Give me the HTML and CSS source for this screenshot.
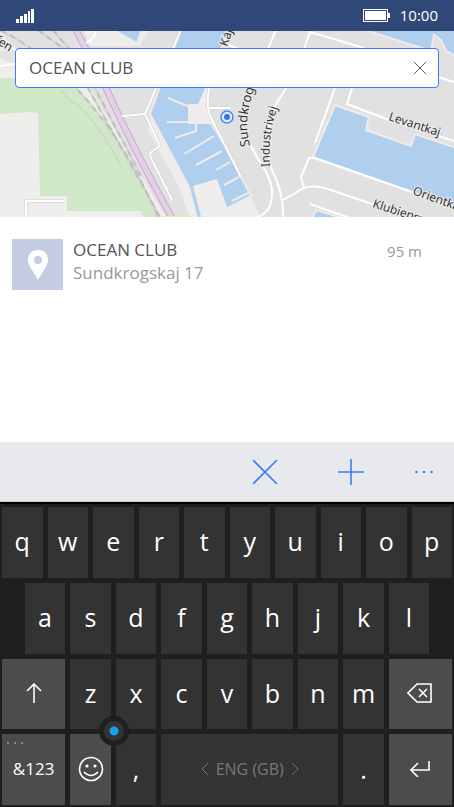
FILE: index.html
```
<!DOCTYPE html>
<html lang="en">
<head>
    <meta charset="UTF-8">
    <meta name="viewport" content="width=device-width, initial-scale=1.0">
    <title>Search place</title>
    <link rel="stylesheet" href="styles.css">
</head>
<body>
    <header class="status-bar">
        <svg class="signal" width="18" height="14" viewBox="0 0 18 14" fill="#fff">
            <rect x="0" y="10" width="3" height="4"/>
            <rect x="4" y="7" width="3" height="7"/>
            <rect x="8" y="5" width="3" height="9"/>
            <rect x="12" y="2" width="2" height="12"/>
            <rect x="15" y="0" width="3" height="14"/>
        </svg>
        <svg class="battery" width="27" height="13" viewBox="0 0 27 13">
            <rect x="0.5" y="0.5" width="24" height="12" fill="none" stroke="#fff"/>
            <rect x="2" y="2" width="21" height="9" fill="#fff"/>
            <rect x="25" y="4" width="2" height="5" fill="#fff"/>
        </svg>
        <span class="clock">10:00</span>
    </header>

    <section class="map">
        <svg class="map-canvas" viewBox="0 31 454 186" preserveAspectRatio="xMidYMid slice">
            <defs>
                <path id="sundkrog" d="M250 146 C244 120 248 108 258 76"/>
                <path id="industrivej" d="M270 167 C268 140 272 122 280 100"/>
            </defs>
            <rect x="0" y="31" width="454" height="186" fill="#e1e1e1"/>

            <!-- light ground and park -->
            <path fill="#f0eeec" d="M0 58 L15 64 L60 75 L90 88 L166 217 H0 Z M0 31 L14 48 L0 52 Z M84 31 H148 L140 46 L90 46 Z"/>
            <path fill="#d0e8c8" d="M0 78 H60 L76 88 L100 118 L118 142 L135 172 L158 217 H143 L141 211 H67 V196 H40 L38 113 L30 112 L0 114 Z"/>
            <path fill="none" stroke="#c2d3ba" d="M61 90 L70 101 L78 105 Q105 132 121 167"/>

            <!-- railway -->
            <g fill="none" stroke="#d6d5d4" stroke-width="2">
                <path d="M0 30 Q45 53 76 88 Q125 140 158 217"/>
                <path d="M38 30 L68 52 L88 88 Q108 124 160 217"/>
                <path d="M53 30 L70 50 L95 88 L141 176"/>
            </g>
            <g fill="none" stroke="#c0bfbf" stroke-width="2" stroke-dasharray="6 5">
                <path d="M0 30 Q45 53 76 88 Q125 140 158 217"/>
                <path d="M38 30 L68 52 L88 88 Q108 124 160 217"/>
                <path d="M53 30 L70 50 L95 88 L141 176"/>
            </g>
            <path fill="none" stroke="#c6aec4" stroke-width="7" d="M76 30 L106 88 Q134 150 172 218"/>
            <path fill="none" stroke="#e4cfe8" stroke-width="5" d="M76 30 L106 88 Q134 150 172 218"/>
            <path fill="#f3e6a8" d="M163 216 H187 V217 H163 Z"/>

            <!-- harbour -->
            <g fill="#b0cfee" stroke="#eeecea" stroke-width="2">
                <path d="M112 29 H142 L137 43 Z"/>
                <path d="M181 29 H229 L206 88 L199 105 H189 V123 H211 L227 150 L251 196 L206 219 H197 L189 187 L150 114 Z"/>
                <path d="M335 105 L369 117 L366 130 L411 146 L415 134 L456 148 V209 L412 192 L313 157 Z"/>
                <path d="M316 210 L346 219 H312 Z"/>
                <path d="M362 29 H456 V56 L446 51 L441 40 L434 35 L431 51 Z"/>
            </g>
            <path fill="#f0eeec" d="M189 105 H199 L206 88 H209 L208 110 L213 123 H189 Z M193 186 L217 179 L228 210 L251 197 L260 217 H201 Z M150 117 L189 187 L196 217 H190 L178 185 L148 130 Z"/>
            <path fill="none" stroke="#eeecea" stroke-width="2" d="M168 98 L190 107 M167 122 H196 V131 L175 138 M184 154 L214 136 M196 165 L222 151 M216 170 L230 162 M224 185 L239 177 M232 201 L248 193"/>

            <!-- streets -->
            <g fill="none" stroke="#cfcecd" stroke-width="3" stroke-linejoin="round">
                <path d="M26 219 V201 H64"/>
                <path d="M181 30 L145 114 L160 146 L151 152 Q149 155 152 160 L172 200 M122 116 L145 114"/>
                <path d="M209 88 Q206 106 210 116 L241 177 M208 108 H230"/>
            </g>
            <g fill="none" stroke="#fff" stroke-width="2" stroke-linejoin="round">
                <path d="M26 219 V201 H64 M0 66 L16 64"/>
                <path d="M181 30 L145 114 L160 146 L151 152 Q149 155 152 160 L172 200 M122 116 L145 114"/>
                <path d="M209 88 Q206 106 210 116 L241 177 M208 108 H230"/>
                <path d="M0 38 L18 52 M96 31 Q94 40 86 43"/>
                <path d="M276 30 L268 49 M364 48 L310 32 L304 49 M227 44 L238 49"/>
                <path d="M286 88 L275 106 Q262 145 272 170 Q284 193 283 219"/>
                <path d="M249 142 Q258 160 265 170 Q276 189 270 206 Q266 214 256 218"/>
                <path d="M335 88 L315 143 M352 88 L347 104 L389 120 L454 141 M438 77 L454 82"/>
                <path d="M283 200 L304 188 Q312 185 325 188 L372 204 L410 219 M304 188 L301 177 L309 158 Q312 157 320 160 L412 192 L454 207 M310 204 L350 218"/>
            </g>

            <g class="street-names">
                <text transform="translate(-6 42) rotate(32)">fen</text>
                <text transform="translate(227 47) rotate(-70)">Kaj</text>
                <text class="main-street"><textPath href="#sundkrog">Sundkrog</textPath></text>
                <text><textPath href="#industrivej">Industrivej</textPath></text>
                <text transform="translate(388 120) rotate(18)">Levantkaj</text>
                <text transform="translate(412 194) rotate(20)">Orientkaj</text>
                <text transform="translate(372 207) rotate(18)">Klubiensvej</text>
            </g>

            <circle cx="227" cy="117" r="6" fill="#e6ecf8" stroke="#4a86f7" stroke-width="1.5"/>
            <circle cx="227" cy="117" r="3" fill="#2f74f5"/>
        </svg>

        <form class="search-box">
            <input type="text" class="search-input" aria-label="Search place" value="OCEAN CLUB">
            <button type="button" class="clear-button" aria-label="Clear">
                <svg width="14" height="14" viewBox="0 0 14 14" fill="none" stroke="#555"><path d="M1 1 L13 13 M13 1 L1 13"/></svg>
            </button>
        </form>
    </section>

    <main class="results">
        <a href="#" class="result">
            <span class="result-icon">
                <svg width="22" height="32" viewBox="0 0 22 32" fill="#fff" fill-rule="evenodd">
                    <path d="M11 1 C17 1 21 5 21 11 C21 17 15 23 11 31 C7 23 1 17 1 11 C1 5 5 1 11 1 Z M11 7 A4 4 0 1 0 11 15 A4 4 0 1 0 11 7 Z"/>
                </svg>
            </span>
            <span class="result-text">
                <span class="result-name">OCEAN CLUB</span>
                <span class="result-address">Sundkrogskaj 17</span>
            </span>
            <span class="result-distance">95 m</span>
        </a>
    </main>

    <nav class="command-bar">
        <button type="button" class="command" aria-label="Cancel">
            <svg width="26" height="26" viewBox="0 0 26 26"><path d="M1 1 L25 25 M25 1 L1 25"/></svg>
        </button>
        <button type="button" class="command" aria-label="Add">
            <svg width="26" height="26" viewBox="0 0 26 26"><path d="M13 0 V26 M0 13 H26"/></svg>
        </button>
        <button type="button" class="command more" aria-label="More">
            <svg width="18" height="4" viewBox="0 0 18 4"><circle cx="1.5" cy="2" r="1.3"/><circle cx="9" cy="2" r="1.3"/><circle cx="16.5" cy="2" r="1.3"/></svg>
        </button>
    </nav>

    <div class="keyboard">
        <button type="button" class="key">q</button>
        <button type="button" class="key">w</button>
        <button type="button" class="key">e</button>
        <button type="button" class="key">r</button>
        <button type="button" class="key">t</button>
        <button type="button" class="key">y</button>
        <button type="button" class="key">u</button>
        <button type="button" class="key">i</button>
        <button type="button" class="key">o</button>
        <button type="button" class="key">p</button>

        <button type="button" class="key key-indent">a</button>
        <button type="button" class="key">s</button>
        <button type="button" class="key">d</button>
        <button type="button" class="key">f</button>
        <button type="button" class="key">g</button>
        <button type="button" class="key">h</button>
        <button type="button" class="key">j</button>
        <button type="button" class="key">k</button>
        <button type="button" class="key">l</button>

        <button type="button" class="key key-wide" aria-label="Shift">
            <svg width="16" height="20" viewBox="0 0 16 20"><path d="M8 20 V1 M1 8 L8 1 L15 8"/></svg>
        </button>
        <button type="button" class="key">z</button>
        <button type="button" class="key">x</button>
        <button type="button" class="key">c</button>
        <button type="button" class="key">v</button>
        <button type="button" class="key">b</button>
        <button type="button" class="key">n</button>
        <button type="button" class="key">m</button>
        <button type="button" class="key key-wide" aria-label="Backspace">
            <svg width="26" height="20" viewBox="0 0 26 20"><path d="M10 1 H24 V19 H10 L1 10 Z M12 6 L20 14 M20 6 L12 14"/></svg>
        </button>

        <button type="button" class="key key-wide key-symbols"><span class="key-dots"></span>&amp;123</button>
        <button type="button" class="key key-emoji" aria-label="Emoji">
            <svg width="26" height="26" viewBox="0 0 26 26">
                <circle cx="13" cy="13" r="11.5"/>
                <path d="M6 16 Q13 23 20 16"/>
                <circle class="eye" cx="9" cy="10" r="1.6"/>
                <circle class="eye" cx="17" cy="10" r="1.6"/>
            </svg>
            <span class="cursor-stick"></span>
        </button>
        <button type="button" class="key">,</button>
        <button type="button" class="key key-space">
            <svg width="8" height="12" viewBox="0 0 8 12"><path d="M7 0 L1 6 L7 12"/></svg>
            ENG (GB)
            <svg width="8" height="12" viewBox="0 0 8 12"><path d="M1 0 L7 6 L1 12"/></svg>
        </button>
        <button type="button" class="key">.</button>
        <button type="button" class="key key-wide" aria-label="Enter">
            <svg width="20" height="16" viewBox="0 0 20 16"><path d="M19 0 V9 H1 M8 2 L1 9 L8 16"/></svg>
        </button>
    </div>
</body>
</html>
```
FILE: styles.css
```
* {
    box-sizing: border-box;
}
body {
    display: flex;
    flex-direction: column;
    min-height: 100vh;
    margin: 0;
    font-family: "Open Sans", "Noto Sans", sans-serif;
    background: #fff;
}
button {
    padding: 0;
    border: none;
    background: none;
    font-family: inherit;
}
svg {
    display: block;
}

/* status bar */
.status-bar {
    display: flex;
    align-items: center;
    height: 31px;
    padding: 0 16px;
    background: #304878;
    color: #fff;
}
.battery {
    margin-left: auto;
}
.clock {
    margin-left: 10px;
    padding-bottom: 2px;
    font-size: 15px;
    line-height: 20px;
}

/* map */
.map {
    position: relative;
    height: 186px;
    padding: 17px 15px;
}
.map-canvas {
    position: absolute;
    top: 0;
    left: 0;
    width: 100%;
    height: 100%;
}
.street-names {
    font-family: "Noto Sans", sans-serif;
    font-size: 12px;
    fill: #333;
    stroke: #ececec;
    stroke-width: 2px;
    paint-order: stroke;
}
.main-street {
    font-size: 13px;
}
.search-box {
    position: relative;
    display: flex;
    align-items: center;
    height: 40px;
    border: 1px solid #3b7bfa;
    border-radius: 4px;
    background: #fff;
}
.search-input {
    flex: 1;
    min-width: 0;
    padding: 0 13px 2px;
    border: none;
    outline: none;
    background: none;
    font-family: inherit;
    font-size: 17px;
    color: #555;
}
.clear-button {
    padding: 11px;
}

/* results */
.results {
    flex: 1;
    padding: 22px 12px;
}
.result {
    display: flex;
    align-items: flex-start;
    color: #555;
    text-decoration: none;
}
.result-icon {
    display: flex;
    align-items: center;
    justify-content: center;
    width: 51px;
    height: 51px;
    background: #c5cde3;
}
.result-text {
    display: flex;
    flex-direction: column;
    flex: 1;
    gap: 1px;
    margin-left: 10px;
    font-size: 17px;
    line-height: 22px;
}
.result-address {
    color: #999;
}
.result-distance {
    margin-right: 20px;
    font-size: 15px;
    line-height: 24px;
    color: #999;
}

/* command bar */
.command-bar {
    display: flex;
    align-items: center;
    justify-content: flex-end;
    gap: 60px;
    height: 60px;
    padding: 0 21px;
    border-bottom: 1px solid #c8cacd;
    background: #e8e9ed;
}
.command svg {
    fill: none;
    stroke: #3b7bfa;
    stroke-width: 1.6;
}
.more {
    margin-left: -9px;
}
.command.more svg {
    fill: #3b7bfa;
    stroke: none;
}

/* keyboard: every letter takes two of the twenty columns */
.keyboard {
    display: grid;
    grid-template-columns: repeat(20, 1fr);
    grid-auto-rows: 1fr;
    gap: 5px;
    height: 305px;
    padding: 3px 2px 2px;
    border-top: 2px solid #000;
    background: #1f1f1f;
}
.key {
    position: relative;
    display: flex;
    align-items: center;
    justify-content: center;
    grid-column: span 2;
    padding-bottom: 2px;
    background: #333;
    color: #fff;
    font-size: 25px;
}
.key svg {
    fill: none;
    stroke: #fff;
    stroke-width: 1.6;
}
.key-indent {
    grid-column: 2 / span 2;
}
.key-wide {
    grid-column: span 3;
    background: #4c4c4c;
}
.key-symbols {
    font-size: 17px;
}
.key-dots {
    position: absolute;
    top: 8px;
    left: 5px;
    width: 2px;
    height: 2px;
    background: #888;
    box-shadow: 7px 0 #888, 14px 0 #888;
}
.key-emoji {
    z-index: 1;
    background: #4c4c4c;
}
.key-emoji .eye {
    fill: #fff;
    stroke: none;
}
.cursor-stick {
    position: absolute;
    top: -18px;
    right: -18px;
    width: 30px;
    height: 30px;
    border: 5px solid #1f1f1f;
    border-radius: 50%;
    background: radial-gradient(circle, #1b9fe8 4px, #333 5px);
}
.key-space {
    grid-column: span 8;
    gap: 7px;
    font-size: 16px;
    color: #777;
}
.key.key-space svg {
    stroke: #777;
    stroke-width: 1;
}
```
